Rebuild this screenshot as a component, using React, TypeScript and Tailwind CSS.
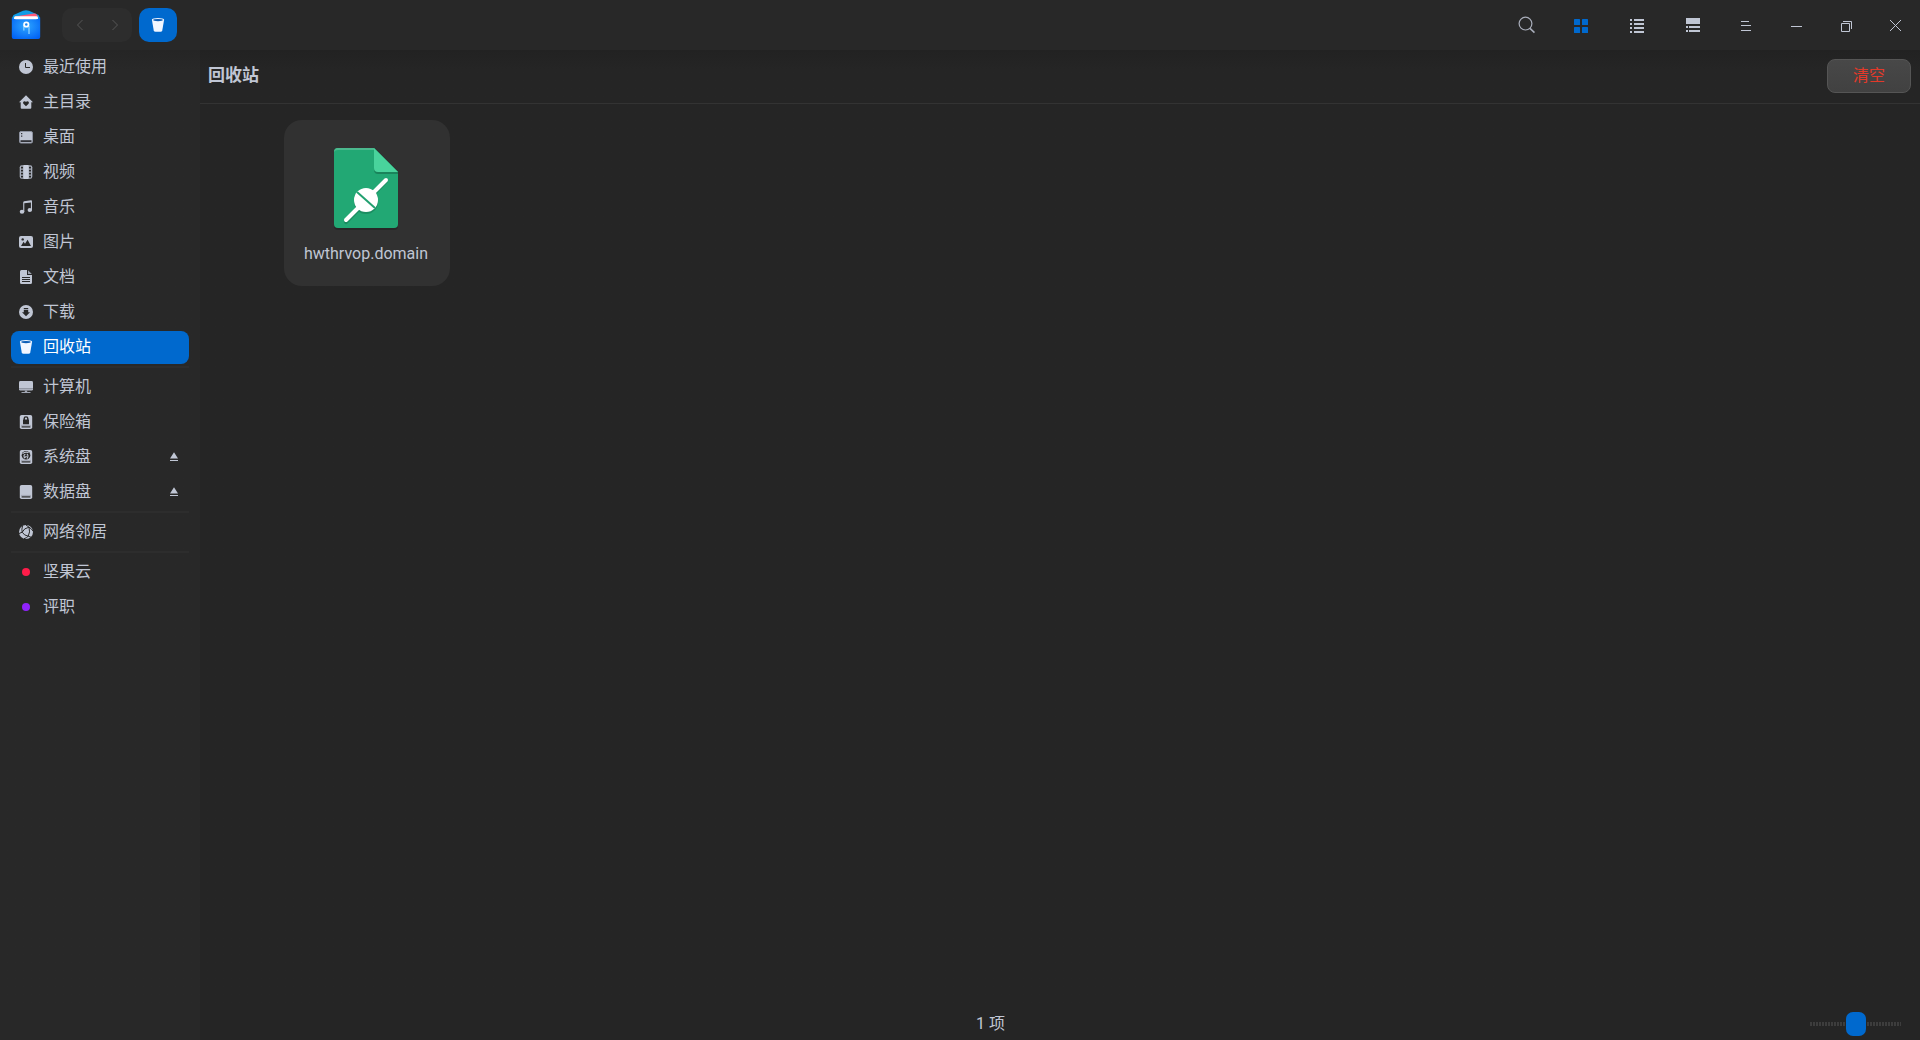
import type { ReactNode } from "react";
import clsx from "clsx";

type Place = {
  label: string;
  icon: ReactNode;
  active?: boolean;
  ejectable?: boolean;
};

const TrashIcon = () => (
  <svg width="14" height="16" viewBox="0 0 14 16">
    <path d="M1 3.2 2.7 13.2Q3 14.7 4.5 14.7H9.5Q11 14.7 11.3 13.2L13 3.2Z" fill="#f2f6ff" />
    <ellipse cx="7" cy="2.9" rx="6.2" ry="1.9" fill="#f2f6ff" />
    <ellipse cx="7" cy="3.1" rx="4.8" ry="1.1" fill="#0b5cb5" />
  </svg>
);

const ClockIcon = () => (
  <svg width="14" height="14" viewBox="0 0 14 14">
    <circle cx="7" cy="7" r="7" fill="#c0c6d4" />
    <path d="M6.5 3V7.5H11" stroke="#282828" fill="none" />
  </svg>
);

const HomeIcon = () => (
  <svg width="14" height="14" viewBox="0 0 14 14" fill="#c0c6d4">
    <path d="M7 .3 14 7.3H12.3V12.8Q12.3 13.8 11.3 13.8H2.7Q1.7 13.8 1.7 12.8V7.3H0Z" />
    <path d="M7 11.3 4.4 8.7C3.6 7.5 4.4 6.3 5.6 6.3Q6.6 6.3 7 7.1 7.4 6.3 8.4 6.3C9.6 6.3 10.4 7.5 9.6 8.7Z" fill="#282828" />
  </svg>
);

const DesktopIcon = () => (
  <svg width="14" height="14" viewBox="0 0 14 14">
    <rect x=".5" y="1.5" width="13" height="11.5" rx="1.5" fill="#c0c6d4" stroke="#8d92a0" />
    <path d="M1.5 10.2H12.5V12H1.5Z" fill="#303136" />
    <path d="M2 3H3.3V4.3H2ZM2 5.5H3.3V6.8H2Z" fill="#33343a" />
  </svg>
);

const VideoIcon = () => (
  <svg width="14" height="14" viewBox="0 0 14 14">
    <rect x=".7" y=".2" width="12.6" height="13.6" rx="2" fill="#a6acba" />
    <path d="M4.5 0H9.5V14H4.5Z" fill="#c8cedc" />
    <path d="M2 1.8H4V3.4H2ZM2 4.8H4V6.4H2ZM2 7.8H4V9.4H2ZM2 10.8H4V12.4H2ZM10 1.8H12V3.4H10ZM10 4.8H12V6.4H10ZM10 7.8H12V9.4H10ZM10 10.8H12V12.4H10Z" fill="#282828" />
  </svg>
);

const MusicIcon = () => (
  <svg width="14" height="14" viewBox="0 0 14 14" fill="#c0c6d4">
    <path d="M4.2 12V2.4Q4.2 1.5 5.1 1.3L12 .3Q13 .2 13 1.2V10.5H11.9V2.4L5.3 3.3V12Z" />
    <ellipse cx="3" cy="11.8" rx="2.3" ry="2" />
    <ellipse cx="10.8" cy="10" rx="2.2" ry="2" />
  </svg>
);

const PictureIcon = () => (
  <svg width="14" height="14" viewBox="0 0 14 14">
    <rect y="1" width="14" height="12" rx="2" fill="#c0c6d4" />
    <path d="M2 11 4.6 6.8 6 8.8 8.6 4.8 12 11Z" fill="#282828" />
    <circle cx="3.7" cy="4.4" r="1.2" fill="#282828" />
  </svg>
);

const DocumentIcon = () => (
  <svg width="14" height="14" viewBox="0 0 14 14">
    <path d="M2.5 0H8V5H13V12.5Q13 14 11.5 14H2.5Q1 14 1 12.5V1.5Q1 0 2.5 0Z" fill="#c0c6d4" />
    <path d="M9 .2 12.8 4H9Z" fill="#9ca1ae" />
    <path d="M3 7.5H11M3 9.5H11M3 11.5H11" stroke="#282828" />
  </svg>
);

const DownloadIcon = () => (
  <svg width="14" height="14" viewBox="0 0 14 14">
    <circle cx="7" cy="7" r="7" fill="#c0c6d4" />
    <path d="M4.8 3H9.2V4.2H4.8ZM4.8 5.1H9.2V7.3H11L7 11.3 3 7.3H4.8Z" fill="#282828" />
  </svg>
);

const ComputerIcon = () => (
  <svg width="14" height="14" viewBox="0 0 14 14">
    <rect y="1" width="14" height="9.6" rx="1.4" fill="#c0c6d4" />
    <path d="M0 8.8H14" stroke="#777c88" strokeWidth=".9" />
    <path d="M5.8 10.6H8.2V12H11.5V13H2.5V12H5.8Z" fill="#a0a5b2" />
  </svg>
);

const DriveBody = ({ children }: { children?: ReactNode }) => (
  <svg width="14" height="14" viewBox="0 0 14 14">
    <rect x=".8" width="12.4" height="14" rx="1.8" fill="#c0c6d4" />
    <path d="M2 10.4H12" stroke="#8b909c" strokeWidth=".6" />
    <path d="M2.6 11.9H11.4" stroke="#282828" strokeWidth="1.2" />
    {children}
  </svg>
);

const VaultIcon = () => (
  <DriveBody>
    <rect x="4" y="4.5" width="6" height="4.8" rx=".6" fill="#282828" />
    <path d="M5.2 5V3.4Q5.2 1.9 7 1.9T8.8 3.4V5" stroke="#282828" fill="none" strokeWidth="1.4" />
  </DriveBody>
);

const SystemDriveIcon = () => (
  <DriveBody>
    <circle cx="7" cy="5.3" r="4.3" fill="#282828" />
    <path d="M3.6 3.6Q6.3 1.2 9.6 2.6M5.6 7.4Q3.9 5.5 6.4 4.2M7.8 3.9Q10 5.4 8 8.6M4.6 8.2 7.6 6.3" stroke="#c0c6d4" strokeWidth="1.1" fill="none" />
  </DriveBody>
);

const NetworkIcon = () => (
  <svg width="14" height="14" viewBox="0 0 14 14">
    <circle cx="7" cy="7" r="7" fill="#c0c6d4" />
    <path d="M3.2 7.2Q5 3 10 2.2Q11.5 7 9.2 11.2Q5 10.5 3.2 7.2ZM0 8.5 3.2 7.2Q2.4 4.5 3.5 1M10 2.2 7 0M10 2.2Q12.4 3.5 14 6M9.2 11.2 12 12.2M9.2 11.2Q7.6 13 5 13.7" stroke="#282828" strokeWidth="1" fill="none" />
  </svg>
);

const EjectIcon = () => (
  <svg width="8" height="10" viewBox="0 0 8 10" fill="#c0c6d4">
    <path d="M4 .3 8 6.5H0ZM0 8H8V9H0Z" />
  </svg>
);

const TagDot = ({ className }: { className: string }) => (
  <span className={clsx("mx-[3px] size-2 rounded-full", className)} />
);

const groups: Place[][] = [
  [
    { label: "最近使用", icon: <ClockIcon /> },
    { label: "主目录", icon: <HomeIcon /> },
    { label: "桌面", icon: <DesktopIcon /> },
    { label: "视频", icon: <VideoIcon /> },
    { label: "音乐", icon: <MusicIcon /> },
    { label: "图片", icon: <PictureIcon /> },
    { label: "文档", icon: <DocumentIcon /> },
    { label: "下载", icon: <DownloadIcon /> },
    { label: "回收站", icon: <TrashIcon />, active: true },
  ],
  [
    { label: "计算机", icon: <ComputerIcon /> },
    { label: "保险箱", icon: <VaultIcon /> },
    { label: "系统盘", icon: <SystemDriveIcon />, ejectable: true },
    { label: "数据盘", icon: <DriveBody />, ejectable: true },
  ],
  [{ label: "网络邻居", icon: <NetworkIcon /> }],
  [
    { label: "坚果云", icon: <TagDot className="bg-[#ff1c49]" /> },
    { label: "评职", icon: <TagDot className="bg-[#9023fc]" /> },
  ],
];

const AppLogo = () => (
  <svg width="30" height="30" viewBox="0 1 30 30">
    <defs>
      <radialGradient id="logo-body" cx=".5" cy=".4" r=".7">
        <stop offset="0" stopColor="#2ea6ff" />
        <stop offset="1" stopColor="#0061f5" />
      </radialGradient>
    </defs>
    <path d="M1 9 2.5 6 12 1.8Q15 .8 18 1.8L27.5 6 29 9V14H1Z" fill="#0f9be6" />
    <path d="M4 7.5 23 4.6Q25 4.4 26 6L27 8.5H4Z" fill="#ff5a78" />
    <rect x="3" y="7.2" width="24" height="4" rx="1.5" fill="#fff" />
    <path d="M.8 8.5Q2.5 10.2 5 10.2H25Q27.5 10.2 29.2 8.5V28Q29.2 30 27.2 30H2.8Q.8 30 .8 28Z" fill="url(#logo-body)" />
    <path d="M12.8 16V21.5M18 17V25" stroke="#7cc8ff" strokeWidth="1.5" />
    <circle cx="15.3" cy="15.5" r="2.2" fill="#1686f5" stroke="#fff" strokeWidth="1.8" />
  </svg>
);

const DomainFileIcon = () => (
  <svg width="66" height="84" viewBox="0 0 66 84">
    <path d="M5 2H41L65 26V79Q65 83 61 83H5Q1 83 1 79V6Q1 2 5 2Z" fill="#1d1d1d" opacity=".5" />
    <path d="M5 1H41L65 25V77Q65 81 61 81H5Q1 81 1 77V5Q1 1 5 1Z" fill="#22a874" />
    <path d="M1 5Q1 1 5 1H41V3H5Q2 3 1 5Z" fill="#4bb98e" />
    <path d="M41 1V22.5Q41 27 45 27H65V25Z" fill="#1a845b" />
    <path d="M41 1V21Q41 25 45 25H65Z" fill="#49d39c" />
    <g transform="translate(0 1)" opacity=".3">
      <path d="M13 74 53 33" stroke="#0b5236" strokeWidth="4.2" strokeLinecap="round" />
      <circle cx="33" cy="54" r="12" fill="#0b5236" />
    </g>
    <path d="M13 73 53 33" stroke="#fff" strokeWidth="4" strokeLinecap="round" />
    <circle cx="33" cy="53" r="12" fill="#fff" />
    <path d="M24 45 42 61" stroke="#22a070" strokeWidth="2" />
  </svg>
);

const SidebarItem = ({ label, icon, active, ejectable }: Place) => (
  <li
    className={clsx(
      "flex h-[33px] items-center rounded-lg pr-[11px] pb-px pl-2",
      active && "bg-[#0069ce] text-white"
    )}
  >
    <a href="#" className="flex flex-1 items-center gap-[10px]">
      {icon}
      <span>{label}</span>
    </a>
    {ejectable && (
      <button type="button" aria-label="弹出">
        <EjectIcon />
      </button>
    )}
  </li>
);

const Sidebar = () => (
  <nav className="w-[200px] shrink-0 bg-[#282828] bg-linear-to-b from-[#252525] to-[#282828] to-[20px] px-[11px] pt-px">
    {groups.map((group, i) => (
      <div key={i}>
        {i > 0 && <hr className="mt-0.5 mb-[3px] h-0.5 border-0 bg-[#2d2d2d]" />}
        <ul className="flex flex-col gap-0.5">
          {group.map((place) => (
            <SidebarItem key={place.label} {...place} />
          ))}
        </ul>
      </div>
    ))}
  </nav>
);

const ToolButton = ({ label, children }: { label: string; children: ReactNode }) => (
  <button type="button" aria-label={label} className="flex h-full w-14 items-center justify-center">
    {children}
  </button>
);

const WindowButton = ({ label, children }: { label: string; children: ReactNode }) => (
  <button
    type="button"
    aria-label={label}
    className="flex h-full w-[50px] items-center justify-center last:w-[49px]"
  >
    {children}
  </button>
);

const TitleBar = () => (
  <header className="flex h-[50px] items-center bg-[#282828] pl-[11px]">
    <AppLogo />
    <div className="ml-[21px] flex h-[34px] w-[70px] rounded-[10px] bg-[#2d2d2d]">
      <button type="button" aria-label="后退" className="flex flex-1 items-center justify-center">
        <svg width="8" height="12" viewBox="0 0 8 12" fill="none" stroke="#565656">
          <path d="M6.5 1 1.5 6 6.5 11" />
        </svg>
      </button>
      <button type="button" aria-label="前进" className="flex flex-1 items-center justify-center">
        <svg width="8" height="12" viewBox="0 0 8 12" fill="none" stroke="#565656">
          <path d="M1.5 1 6.5 6 1.5 11" />
        </svg>
      </button>
    </div>
    <button
      type="button"
      aria-label="回收站"
      className="ml-[7px] flex h-[34px] w-[38px] items-center justify-center rounded-[10px] bg-[#0069ce]"
    >
      <TrashIcon />
    </button>

    <div className="ml-auto flex h-full items-center">
      <ToolButton label="搜索">
        <svg width="20" height="18" viewBox="0 0 20 18" fill="none" stroke="#a9aebb" strokeWidth="1.2">
          <circle cx="10.5" cy="7.6" r="6.4" />
          <path d="M15 12.3 19.5 16.6" strokeWidth="1.6" />
        </svg>
      </ToolButton>
      <ToolButton label="图标视图">
        <svg width="14" height="16" viewBox="0 0 14 16" fill="#0069ce">
          <rect y="2" width="6" height="6" rx=".6" />
          <rect x="8" y="2" width="6" height="6" rx=".6" />
          <rect y="10" width="6" height="6" rx=".6" />
          <rect x="8" y="10" width="6" height="6" rx=".6" />
        </svg>
      </ToolButton>
      <ToolButton label="列表视图">
        <svg width="14" height="16" viewBox="0 0 14 16" fill="#c0c6d4">
          <path d="M0 2H2V4H0ZM4 2H14V4H4ZM0 6H2V8H0ZM4 6H14V8H4ZM0 10H2V12H0ZM4 10H14V12H4ZM0 14H2V16H0ZM4 14H14V16H4Z" />
        </svg>
      </ToolButton>
      <ToolButton label="分栏视图">
        <svg width="14" height="14" viewBox="0 0 14 14" fill="#c0c6d4">
          <path d="M0 0H14V6H0ZM0 8H2V10H0ZM3 8H14V10H3ZM0 12H2V14H0ZM3 12H14V14H3Z" />
        </svg>
      </ToolButton>
      <WindowButton label="菜单">
        <svg width="10" height="12" viewBox="0 0 10 12" fill="#c0c6d4">
          <path d="M0 2H8V3H0ZM0 6H10V7H0ZM0 11H10V12H0Z" />
        </svg>
      </WindowButton>
      <WindowButton label="最小化">
        <svg width="12" height="4" viewBox="0 0 12 4" fill="#c0c6d4">
          <path d="M1 3H12V4H1Z" />
        </svg>
      </WindowButton>
      <WindowButton label="还原">
        <svg width="12" height="14" viewBox="0 0 12 14" fill="none" stroke="#c0c6d4">
          <path d="M1.5 5.5H9.5V13.5H1.5ZM3 3.5H11.5V11" />
        </svg>
      </WindowButton>
      <WindowButton label="关闭">
        <svg width="11" height="12" viewBox="0 0 11 12" stroke="#c0c6d4">
          <path d="M0 1 11 12M11 1 0 12" />
        </svg>
      </WindowButton>
    </div>
  </header>
);

const App = () => {
  return (
    <div className="flex min-h-screen flex-col bg-[#252525] font-[Roboto,'Noto_Sans_CJK_SC',sans-serif] text-base text-[#c0c6d4]">
      <TitleBar />

      <div className="flex flex-1">
        <Sidebar />

        <main className="flex flex-1 flex-col bg-linear-to-b from-[#222222] to-[#252525] to-[20px]">
          <div className="flex h-[54px] items-center justify-between border-b border-[#333333] pr-[9px] pb-px pl-2">
            <h1 className="text-[17px] font-bold">回收站</h1>
            <button
              type="button"
              className="h-[34px] w-[84px] rounded-lg border border-[#555555] bg-linear-to-b from-[#484848] to-[#414141] text-[#e23a2a]"
            >
              清空
            </button>
          </div>

          {/* Files */}
          <div className="flex flex-1 flex-wrap content-start pt-4 pl-[84px]">
            <figure className="flex size-[166px] flex-col items-center rounded-[18px] bg-[#313131] pt-[27px] pr-0.5">
              <DomainFileIcon />
              <figcaption className="mt-[11px]">hwthrvop.domain</figcaption>
            </figure>
          </div>
        </main>
      </div>

      {/* Status bar */}
      <footer className="flex h-8">
        <div className="w-[200px] shrink-0 bg-[#282828]" />
        <div className="flex flex-1 items-center pr-[19px]">
          <p className="flex-1 text-center">1 项</p>
          <input
            type="range"
            aria-label="图标大小"
            defaultValue={50}
            className="ml-[29px] h-6 w-[91px] appearance-none bg-[repeating-linear-gradient(to_right,#3d3d3d_0_2px,transparent_2px_3px)] bg-size-[100%_4px] bg-center bg-no-repeat [&::-webkit-slider-thumb]:h-6 [&::-webkit-slider-thumb]:w-5 [&::-webkit-slider-thumb]:appearance-none [&::-webkit-slider-thumb]:rounded-[7px] [&::-webkit-slider-thumb]:bg-[#0069ce]"
          />
        </div>
      </footer>
    </div>
  );
};

export default App;
